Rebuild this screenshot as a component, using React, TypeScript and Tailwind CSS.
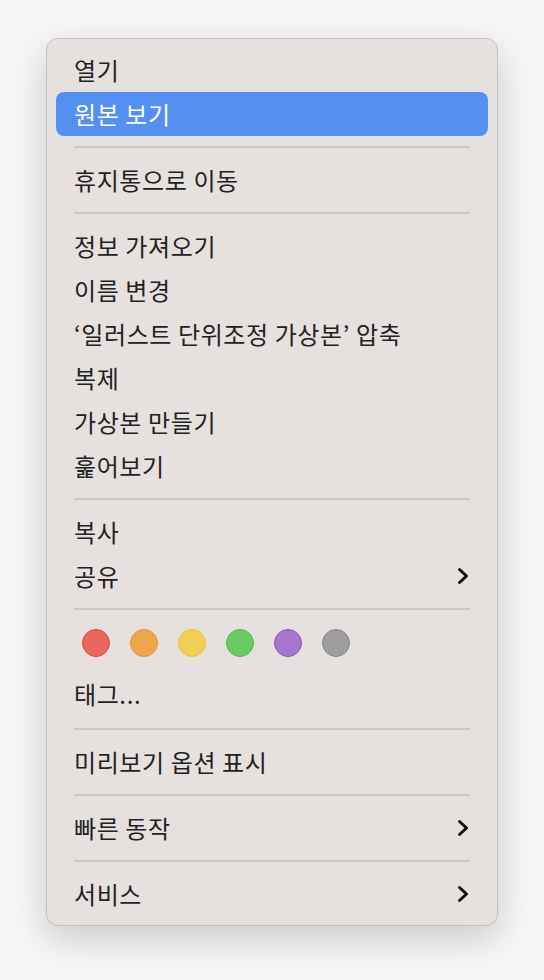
import React from "react";

type Row =
  | { kind: "item"; label: string; active?: boolean; sub?: boolean }
  | { kind: "sep" }
  | { kind: "tags" }
  | { kind: "tagitem"; label: string };

const rows: Row[] = [
  { kind: "item", label: "열기" },
  { kind: "item", label: "원본 보기", active: true },
  { kind: "sep" },
  { kind: "item", label: "휴지통으로 이동" },
  { kind: "sep" },
  { kind: "item", label: "정보 가져오기" },
  { kind: "item", label: "이름 변경" },
  { kind: "item", label: "‘일러스트 단위조정 가상본’ 압축" },
  { kind: "item", label: "복제" },
  { kind: "item", label: "가상본 만들기" },
  { kind: "item", label: "훑어보기" },
  { kind: "sep" },
  { kind: "item", label: "복사" },
  { kind: "item", label: "공유", sub: true },
  { kind: "sep" },
  { kind: "tags" },
  { kind: "tagitem", label: "태그..." },
  { kind: "sep" },
  { kind: "item", label: "미리보기 옵션 표시" },
  { kind: "sep" },
  { kind: "item", label: "빠른 동작", sub: true },
  { kind: "sep" },
  { kind: "item", label: "서비스", sub: true },
];

const tagColors = [
  "bg-[#e8675e] border-[#e0463e]",
  "bg-[#eda64c] border-[#e8922f]",
  "bg-[#f2cf53] border-[#eec23c]",
  "bg-[#6dcb67] border-[#54bb4b]",
  "bg-[#a777cf] border-[#9151c4]",
  "bg-[#9e9da0] border-[#85848a]",
];

function Chevron() {
  return (
    <svg width="14" height="20" viewBox="0 0 14 20" fill="none">
      <path d="M3.5 3.5 L10.5 10 L3.5 16.5" stroke="#111" strokeWidth="3" strokeLinecap="round" strokeLinejoin="round" />
    </svg>
  );
}

export default function App() {
  return (
    <div
      className="min-h-screen w-full bg-[#f6f6f6] pt-[38px] flex justify-center"
      style={{ fontFamily: '"Noto Sans CJK KR", "Noto Sans", sans-serif' }}
    >
      <div className="w-[452px] h-[888px] rounded-[12px] border border-[#c4c0be] bg-[#e6e1df] pt-[9px] pb-[10px] shadow-[0_12px_36px_rgba(0,0,0,0.18)]">
        {rows.map((r, i) => {
          if (r.kind === "sep") {
            return (
              <div key={i} className="h-[22px] flex items-center px-[27px]">
                <div className="h-[2px] w-full bg-[#cdc8c6]" />
              </div>
            );
          }
          if (r.kind === "tags") {
            return (
              <div key={i} className="h-[50px] pt-[9px] pl-[35px] flex items-start gap-[20px]">
                {tagColors.map((c) => (
                  <div key={c} className={`w-[28px] h-[28px] rounded-full border-[1.5px] ${c}`} />
                ))}
              </div>
            );
          }
          if (r.kind === "tagitem") {
            return (
              <div key={i} className="h-[48px] flex items-center pl-[27px] text-[24px] tracking-[0.6px] text-[#222]">
                {r.label}
              </div>
            );
          }
          return (
            <div key={i} className="px-[9px]">
              <div
                className={`h-[44px] flex items-center justify-between pl-[18px] pr-[18px] rounded-[8px] text-[24px] tracking-[0.6px] ${
                  r.active ? "bg-[#5490f2] text-white" : "text-[#222]"
                }`}
              >
                <span>{r.label}</span>
                {r.sub && <Chevron />}
              </div>
            </div>
          );
        })}
      </div>
    </div>
  );
}
